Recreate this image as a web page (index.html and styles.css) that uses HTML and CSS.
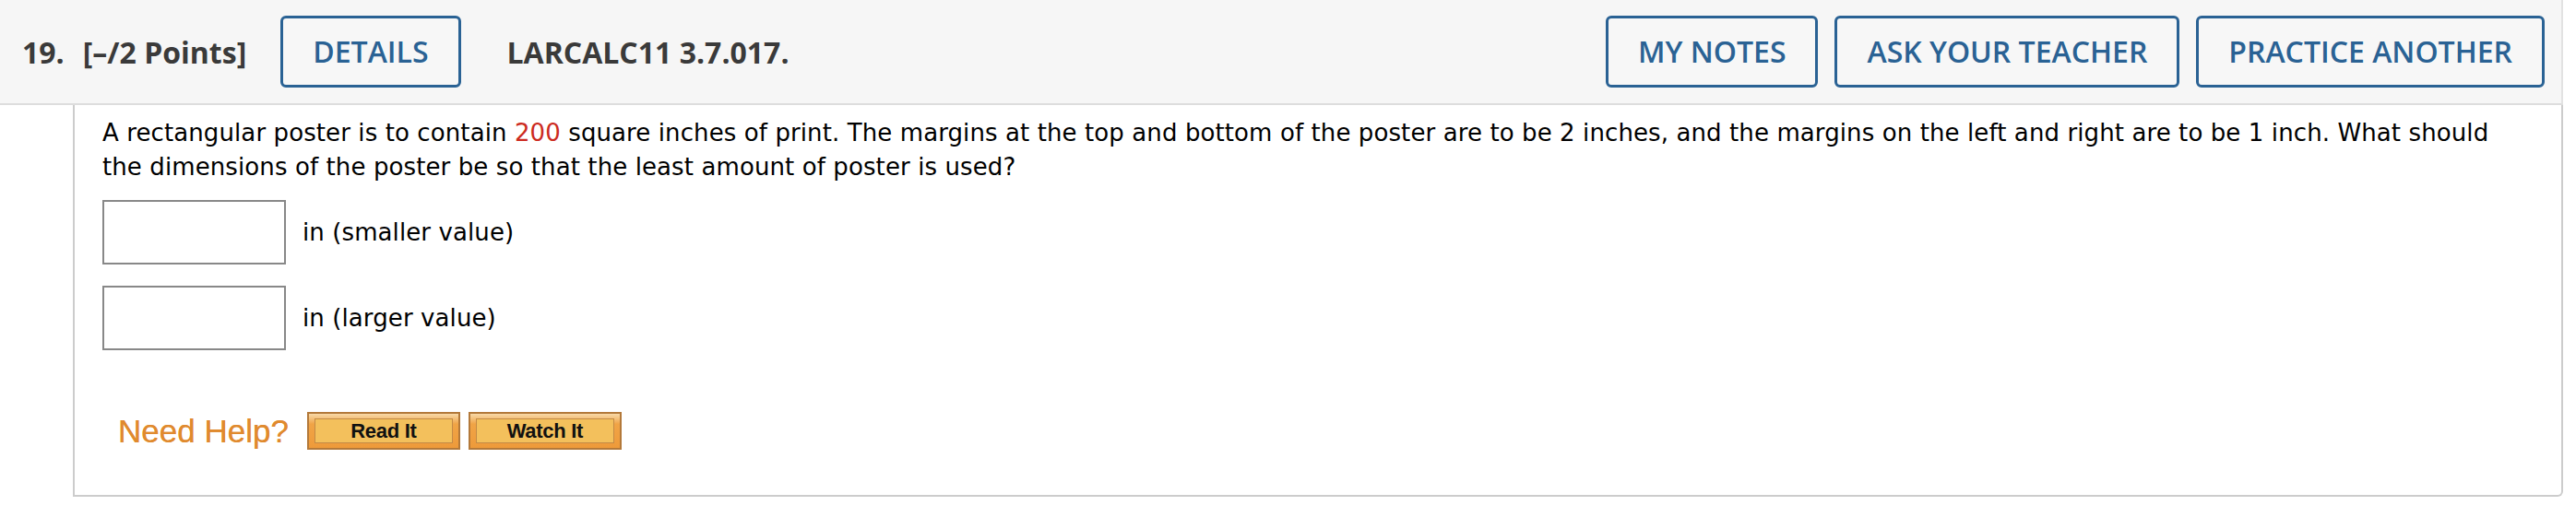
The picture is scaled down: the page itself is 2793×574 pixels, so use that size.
FILE: index.html
```html
<!DOCTYPE html>
<html>
<head>
<meta charset="utf-8">
<link rel="stylesheet" href="styles.css">
</head>
<body>
<div class="question">
  <div class="qhead">
    <span class="qnum">19.</span>
    <span class="qpoints">[–/2 Points]</span>
    <button class="obtn details">DETAILS</button>
    <span class="qcode">LARCALC11 3.7.017.</span>
    <div class="qactions">
      <button class="obtn">MY NOTES</button>
      <button class="obtn">ASK YOUR TEACHER</button>
      <button class="obtn">PRACTICE ANOTHER</button>
    </div>
  </div>
  <div class="qbody">
    <p class="prompt">A rectangular poster is to contain <span class="red">200</span> square inches of print. The margins at the top and bottom of the poster are to be 2 inches, and the margins on the left and right are to be 1 inch. What should the dimensions of the poster be so that the least amount of poster is used?</p>
    <div class="answer"><input class="ans" type="text"><span class="unit">in (smaller value)</span></div>
    <div class="answer second"><input class="ans" type="text"><span class="unit">in (larger value)</span></div>
    <div class="help">
      <span class="needhelp">Need Help?</span>
      <span class="hbtn"><span class="hinner">Read It</span></span>
      <span class="hbtn"><span class="hinner">Watch It</span></span>
    </div>
  </div>
</div>
</body>
</html>
```

FILE: styles.css
```css
html, body {
  margin: 0;
  padding: 0;
  background: #ffffff;
}
.question {
  width: 2779px;
}
.qhead {
  display: flex;
  align-items: center;
  background: #f6f6f6;
  border-bottom: 2px solid #dddddd;
  border-right: 2px solid #e2e2e2;
  padding: 0 18px 0 24px;
  font-family: "Open Sans", sans-serif;
  color: #3a3a3a;
  box-sizing: border-box;
  height: 114px;
}
.qnum {
  font-weight: 700;
  font-size: 32px;
}
.qpoints {
  font-weight: 700;
  font-size: 32px;
  margin-left: 20px;
}
.qcode {
  font-weight: 700;
  font-size: 32px;
  margin-left: 50px;
}
.obtn {
  font-family: "Open Sans", sans-serif;
  font-weight: 600;
  font-size: 32px;
  color: #2a6294;
  background: #f7f7f7;
  border: 3px solid #2a6294;
  border-radius: 6px;
  height: 78px;
  padding: 0 32px;
  box-sizing: border-box;
  line-height: 1;
}
.details {
  margin-left: 37px;
}
.qactions {
  margin-left: auto;
  display: flex;
  gap: 18px;
}
.qbody {
  margin-left: 79px;
  border: 2px solid #cccccc;
  border-top: none;
  border-bottom-right-radius: 6px;
  height: 425px;
  box-sizing: border-box;
  padding: 12px 0 0 30px;
  font-family: "DejaVu Sans", Verdana, sans-serif;
  color: #000000;
}
.prompt {
  margin: 0;
  font-size: 26px;
  line-height: 37px;
  letter-spacing: 0.1px;
  width: 2625px;
}
.red {
  color: #cc2a20;
}
.answer {
  display: flex;
  align-items: center;
  margin-top: 17px;
}
.answer.second {
  margin-top: 23px;
}
.ans {
  width: 199px;
  height: 70px;
  border: 2px solid #888888;
  box-sizing: border-box;
  margin: 0;
  padding: 0;
  background: #fff;
}
.unit {
  font-size: 26px;
  letter-spacing: 0.1px;
  margin-left: 18px;
}
.help {
  display: flex;
  align-items: center;
  margin-top: 67px;
  padding-left: 17px;
}
.needhelp {
  font-family: "Liberation Sans", Arial, sans-serif;
  font-size: 35px;
  color: #e08a2e;
  margin-right: 20px;
  text-shadow: 0 0 0.6px #e08a2e;
}
.hbtn {
  display: flex;
  width: 166px;
  height: 41px;
  box-sizing: border-box;
  border: 2px solid #b3793a;
  background: linear-gradient(#f8d9a8, #f0a446 30%, #ee9a3a);
  padding: 5px 6px;
  margin-right: 9px;
}
.hinner {
  flex: 1;
  display: flex;
  align-items: center;
  justify-content: center;
  background: #f3c05c;
  border: 1px solid #c38a46;
  font-family: "Liberation Sans", Arial, sans-serif;
  font-weight: 700;
  font-size: 22px;
  letter-spacing: -0.3px;
  color: #111111;
}
```
